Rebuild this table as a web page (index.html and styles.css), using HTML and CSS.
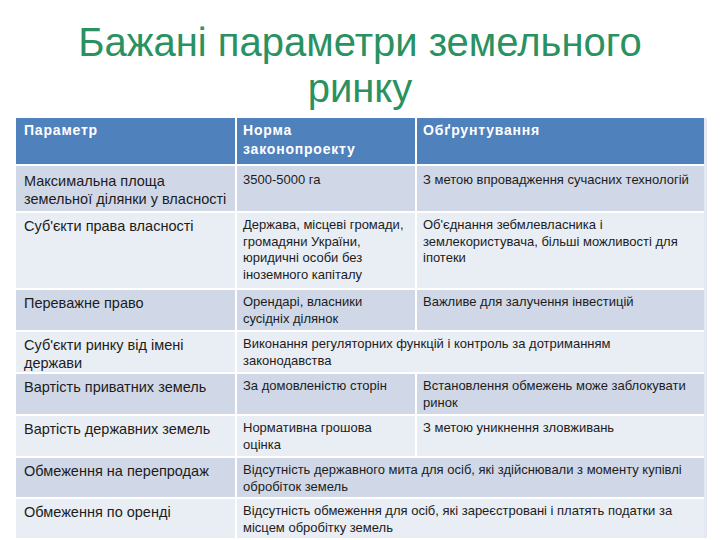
FILE: index.html
```html
<!DOCTYPE html>
<html lang="uk">
<head>
<meta charset="utf-8">
<title>Бажані параметри земельного ринку</title>
<link rel="stylesheet" href="styles.css">
</head>
<body>
<h1 class="title">Бажані параметри земельного<br>ринку</h1>
<div class="table">
  <div class="cell head c1">Параметр</div>
  <div class="cell head">Норма<br>законопроекту</div>
  <div class="cell head">Обґрунтування</div>

  <div class="cell dark c1 first">Максимальна площа<br>земельної ділянки у власності</div>
  <div class="cell dark first">3500-5000 га</div>
  <div class="cell dark first">З метою впровадження сучасних технологій</div>

  <div class="cell light c1">Суб'єкти права власності</div>
  <div class="cell light">Держава, місцеві громади,<br>громадяни України,<br>юридичні особи без<br>іноземного капіталу</div>
  <div class="cell light">Об'єднання зебмлевласника і<br>землекористувача, більші можливості для<br>іпотеки</div>

  <div class="cell dark c1">Переважне право</div>
  <div class="cell dark">Орендарі, власники<br>сусідніх ділянок</div>
  <div class="cell dark">Важливе для залучення інвестицій</div>

  <div class="cell light c1">Суб'єкти ринку від імені<br>держави</div>
  <div class="cell light span2">Виконання регуляторних функцій і контроль за дотриманням<br>законодавства</div>

  <div class="cell dark c1">Вартість приватних земель</div>
  <div class="cell dark">За домовленістю сторін</div>
  <div class="cell dark">Встановлення обмежень може заблокувати<br>ринок</div>

  <div class="cell light c1">Вартість державних земель</div>
  <div class="cell light">Нормативна грошова<br>оцінка</div>
  <div class="cell light">З метою уникнення зловживань</div>

  <div class="cell dark c1">Обмеження на перепродаж</div>
  <div class="cell dark span2">Відсутність державного мита для осіб, які здійснювали з моменту купівлі<br>обробіток земель</div>

  <div class="cell light c1">Обмеження по оренді</div>
  <div class="cell light span2">Відсутність обмеження для осіб, які зареєстровані і платять податки за<br>місцем обробітку земель</div>
</div>
</body>
</html>
```

FILE: styles.css
```css
html, body {
  margin: 0;
  padding: 0;
  background: #ffffff;
}
body {
  width: 720px;
  height: 540px;
  overflow: hidden;
  font-family: "Liberation Sans", Arial, sans-serif;
}
.title {
  margin: 19px 0 7px 0;
  font-family: "Liberation Sans", Arial, sans-serif;
  font-weight: normal;
  font-size: 40px;
  line-height: 46px;
  color: #2a9160;
  text-align: center;
}
.table {
  margin-left: 16px;
  width: 688px;
  display: grid;
  grid-template-columns: 219px 178px 287px;
  grid-template-rows: 46px 45px 75px 40px 40px 40px 40px 39px 39px;
  column-gap: 2px;
  row-gap: 2px;
  background: #ffffff;
  box-shadow: 3px 0 0 #e4e9f1;
}
.cell {
  padding: 4px 6px 0 6px;
  font-size: 13px;
  line-height: 16.5px;
  color: #1c1c1c;
  white-space: nowrap;
  overflow: hidden;
}
.cell.c1 {
  padding-left: 8px;
  font-size: 14.5px;
  line-height: 18px;
}
.cell.first {
  padding-top: 6px;
}
.head {
  background: #4f81bd;
  color: #ffffff;
  font-size: 14px;
  font-weight: bold;
  letter-spacing: 0.8px;
  line-height: 19px;
  padding-top: 3px;
}
.head.c1 {
  font-size: 14px;
  line-height: 19px;
}
.dark {
  background: #d0d8e8;
}
.light {
  background: #e9edf4;
}
.span2 {
  grid-column: span 2;
}
```
